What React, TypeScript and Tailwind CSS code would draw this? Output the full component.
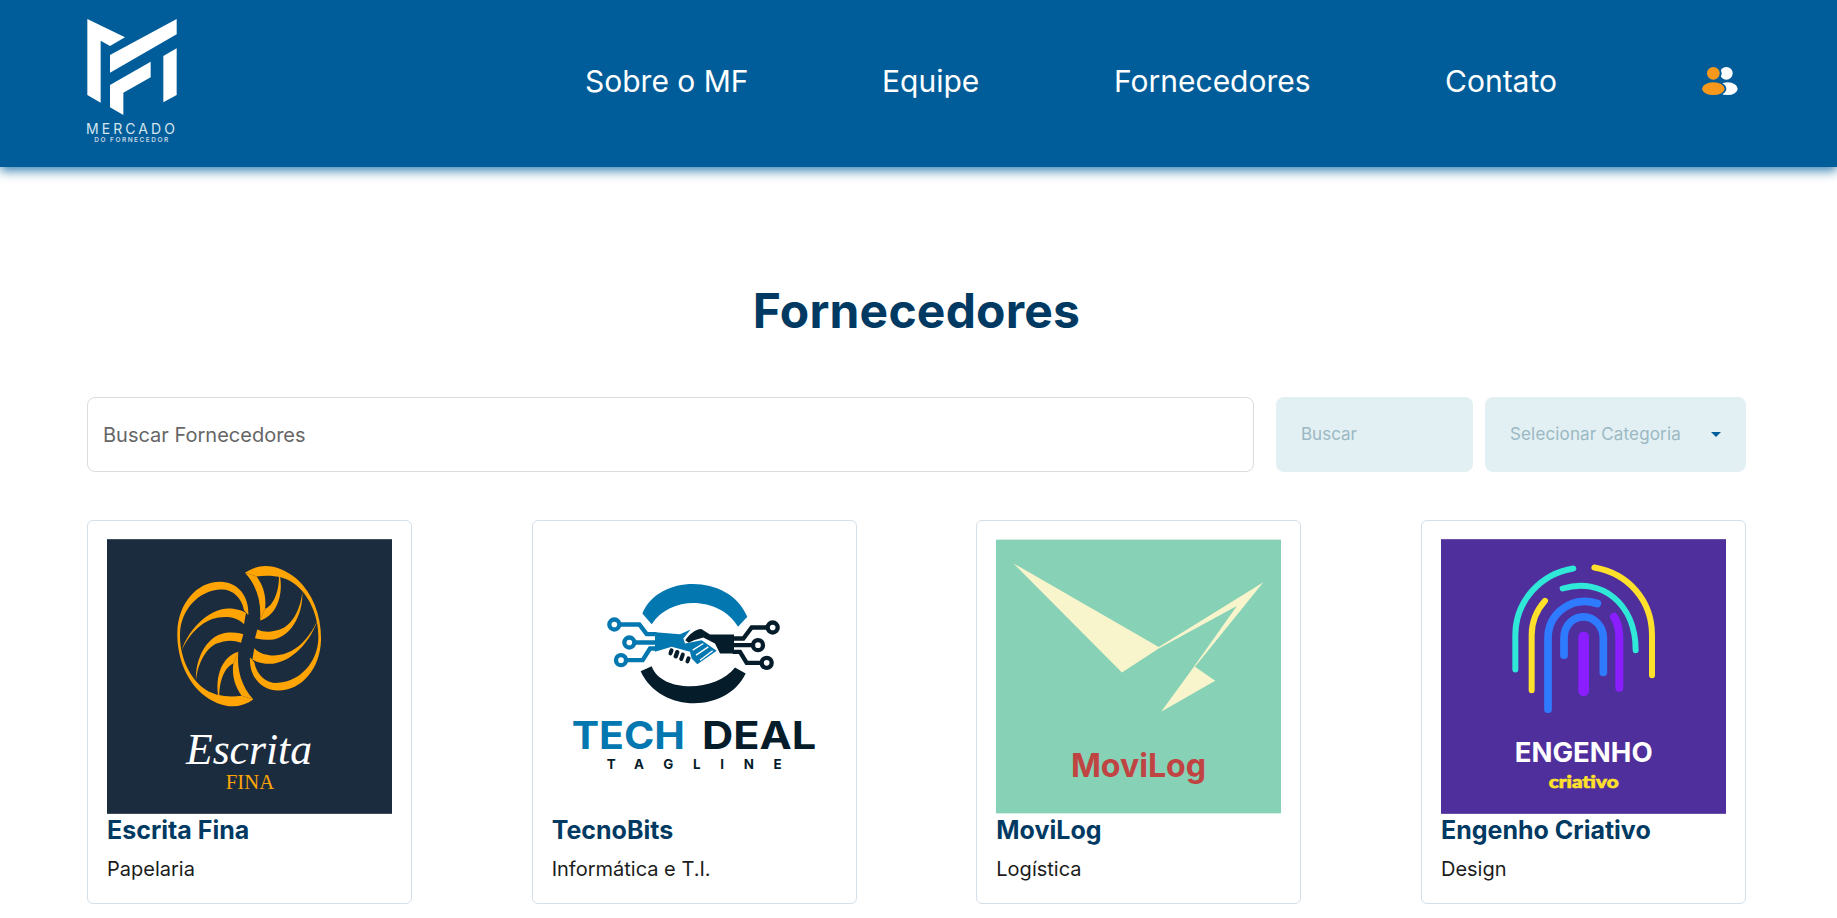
import { ReactNode } from 'react';

const navItems = [
  { label: 'Sobre o MF', width: 'w-[161px]' },
  { label: 'Equipe', width: 'w-[96px]' },
  { label: 'Fornecedores', width: 'w-[195px]' },
  { label: 'Contato', width: 'w-[114px]' },
];

function MfLogo() {
  return (
    <div className="flex w-[92px] flex-col items-center">
      <svg width="90" height="96" viewBox="82 57 268 288" fill="#ffffff">
        <polygon points="82,57 195,112 150,138 122,122 122,308 82,285" />
        <polygon points="350,57 350,103 150,218 150,165" />
        <polygon points="272,185 272,232 190,278 190,345 150,322 150,255" />
        <polygon points="350,145 350,285 310,307 310,168" />
      </svg>
      <span className="mt-[7px] text-[14px] leading-[13px] tracking-[3.1px] whitespace-nowrap text-[#d5e5ef]">MERCADO</span>
      <span className="mt-[2px] text-[6.5px] leading-[7px] font-semibold tracking-[1.5px] whitespace-nowrap text-[#c3d8e6]">DO FORNECEDOR</span>
    </div>
  );
}

function UserIcon() {
  return (
    <svg width="36" height="30" viewBox="0 0 108 90">
      <circle cx="73" cy="22" r="19" fill="#ffffff" />
      <ellipse cx="77" cy="68" rx="30" ry="19" fill="#ffffff" />
      <circle cx="34" cy="22" r="25" fill="#015d99" />
      <ellipse cx="34" cy="68" rx="39" ry="23" fill="#015d99" />
      <circle cx="34" cy="22" r="19" fill="#f7981d" />
      <ellipse cx="34" cy="68" rx="34" ry="19" fill="#f7981d" />
    </svg>
  );
}

function EscritaLogo() {
  const lobe = (
    <>
      <path d="M250 418 C205 450 150 445 95 400 C45 355 20 285 22 215 C25 130 80 65 150 65 C205 65 238 110 235 165 L222 150 C215 110 185 85 150 88 C85 92 32 150 30 220 C28 285 55 345 95 380 C130 410 180 412 215 407Z" />
      <path d="M33 275 C60 195 125 145 175 145 C195 145 215 150 228 158 L222 192 C200 170 170 168 145 172 C95 180 55 225 33 275Z" />
      <path d="M78 362 C75 290 115 220 175 217 C190 217 205 218 220 222 L213 248 C190 238 165 240 140 250 C105 265 82 315 78 362Z" />
      <path d="M145 408 C135 350 155 290 205 275 L190 310 C165 320 148 360 148 408Z" />
      <path d="M205 275 C200 330 215 380 250 418 L215 407 C195 380 185 345 190 310Z" />
    </>
  );
  return (
    <svg className="block h-full w-full" viewBox="81 87 855 824">
      <rect x="81" y="87" width="855" height="824" fill="#1c2c3f" />
      <g fill="#fea405" transform="translate(270 150)">
        {lobe}
        <g transform="rotate(180 237.5 228)">{lobe}</g>
      </g>
      <text x="507" y="762" textAnchor="middle" fontFamily="'Liberation Serif', serif" fontStyle="italic" fontSize="130" fill="#ffffff" textLength="378" lengthAdjust="spacingAndGlyphs">Escrita</text>
      <text x="510" y="836" textAnchor="middle" fontFamily="'Liberation Serif', serif" fontSize="60" fill="#fea405" textLength="145" lengthAdjust="spacingAndGlyphs">FINA</text>
    </svg>
  );
}

function TechDealLogo() {
  const blue = '#0277b0';
  const dark = '#051c2a';
  return (
    <svg className="block h-full w-full" viewBox="66 87 855 824">
      <rect x="66" y="87" width="855" height="824" fill="#ffffff" />
      <path d="M337 310 C385 190 600 190 652 320 L624 350 C575 262 425 250 365 342Z" fill={blue} />
      <g transform="translate(210 300)">
        <path d="M122 183 L155 168 C185 250 350 245 405 172 L437 190 C380 310 180 310 122 183Z" fill={dark} />
        <g fill="none" stroke={blue} strokeWidth="13">
          <circle cx="43" cy="43" r="15" />
          <circle cx="88" cy="97" r="15" />
          <circle cx="63" cy="150" r="15" />
          <path d="M58 43 H118 L140 72 H170 M103 97 H170 M78 150 H128 L150 115 H170" />
        </g>
        <path d="M165 66 L240 72 L272 58 L250 85 L255 100 L305 90 L350 122 L292 162 L275 145 L270 125 L215 110 L165 125Z" fill={blue} />
        <g stroke="#ffffff" strokeWidth="4">
          <path d="M300 150 L338 122 M288 135 L325 110 M278 120 L310 100" />
        </g>
        <g fill={dark}>
          <rect x="207" y="114" width="12" height="22" rx="6" transform="rotate(20 213 125)" />
          <rect x="223" y="119" width="13" height="26" rx="6" transform="rotate(20 229 132)" />
          <rect x="240" y="127" width="12" height="26" rx="6" transform="rotate(20 246 140)" />
          <rect x="258" y="138" width="12" height="22" rx="6" transform="rotate(20 264 149)" />
        </g>
        <path d="M256 90 C268 72 290 55 305 57 L330 73 H402 V130 L360 130 L345 100 L310 82 L282 90 L266 98Z" fill={dark} />
        <g fill="none" stroke={dark} strokeWidth="13">
          <circle cx="518" cy="52" r="15" />
          <circle cx="474" cy="105" r="15" />
          <circle cx="500" cy="158" r="15" />
          <path d="M503 52 H455 L430 85 H398 M459 105 H398 M485 158 H440 L420 125 H398" />
        </g>
      </g>
      <text x="125" y="716" fontFamily="Inter, sans-serif" fontWeight="700" fontSize="116" fill={blue} textLength="340" lengthAdjust="spacingAndGlyphs">TECH</text>
      <text x="516" y="716" fontFamily="Inter, sans-serif" fontWeight="700" fontSize="116" fill={dark} textLength="343" lengthAdjust="spacingAndGlyphs">DEAL</text>
      <text x="230" y="777" fontFamily="Inter, sans-serif" fontWeight="700" fontSize="40" fill={dark} textLength="525">TAGLINE</text>
    </svg>
  );
}

function MoviLogLogo() {
  return (
    <svg className="block h-full w-full" viewBox="63 87 858 824">
      <rect x="63" y="87" width="858" height="824" fill="#87d1b7" />
      <polygon points="115,158 553,410 868,215 662,470 723,512 560,605 655,475 788,287 553,415 442,487" fill="#f8f4cb" />
      <text x="492" y="803" textAnchor="middle" fontFamily="Inter, sans-serif" fontWeight="700" fontSize="100" fill="#c04442" textLength="407" lengthAdjust="spacingAndGlyphs">MoviLog</text>
    </svg>
  );
}

function EngenhoLogo() {
  return (
    <svg className="block h-full w-full" viewBox="78 87 855 824">
      <rect x="78" y="87" width="855" height="824" fill="#4f2f9c" />
      <g fill="none" strokeLinecap="round" strokeWidth="18">
        <path d="M301 478 V375 C301 270 380 190 475 175" stroke="#2fe8d8" />
        <path d="M538 172 C640 190 711 270 711 375 V495" stroke="#ffe02a" />
        <path d="M443 235 C560 200 662 280 662 420" stroke="#2fe8d8" />
        <path d="M350 540 V375 C350 330 365 300 390 272" stroke="#ffe02a" />
        <path d="M399 597 V385 C399 310 470 255 547 280" stroke="#2f7bff" strokeWidth="23" />
        <path d="M447 435 V385 C447 340 480 320 505 320 C540 320 565 350 565 385 V487" stroke="#2f7bff" strokeWidth="23" />
        <path d="M506 380 V542" stroke="#8a1eff" strokeWidth="32" />
        <path d="M597 320 C610 340 613 360 613 385 V533" stroke="#8a1eff" strokeWidth="24" />
      </g>
      <text x="506" y="755" textAnchor="middle" fontFamily="Inter, sans-serif" fontWeight="700" fontSize="80" fill="#ffffff" textLength="414" lengthAdjust="spacingAndGlyphs">ENGENHO</text>
      <text x="506" y="835" textAnchor="middle" fontFamily="Lato, sans-serif" fontWeight="900" fontSize="52" fill="#ffe02a" stroke="#ffe02a" strokeWidth="2" textLength="210" lengthAdjust="spacingAndGlyphs">criativo</text>
    </svg>
  );
}

function SupplierCard({ logo, name, category }: { logo: ReactNode; name: string; category: string }) {
  return (
    <div className="h-[384px] w-[325px] rounded-[6px] border border-[#d3e0ea] px-[19px] pt-[18px]">
      <div className="h-[275px] w-[285px]">{logo}</div>
      <h3 className="mt-[1px] text-[25px] leading-[30px] font-bold text-[#003a63]">{name}</h3>
      <p className="mt-[10px] text-[20px] leading-[28px] text-[#1c1c1c]">{category}</p>
    </div>
  );
}

export default function App() {
  return (
    <div className="min-h-[918px] bg-white font-['Inter',sans-serif]">
      <header className="flex h-[167px] items-center justify-between bg-[#015d99] pr-[99px] pb-[4px] pl-[86px] shadow-[0_4px_10px_rgba(1,93,153,0.75)]">
        <MfLogo />
        <nav className="mb-[2px] flex items-center">
          {navItems.map((item, i) => (
            <a key={item.label} className={`${item.width} ${i < 3 ? 'mr-[136px]' : 'mr-[143px]'} text-[30px] leading-[36px] whitespace-nowrap text-white`}>
              {item.label}
            </a>
          ))}
          <UserIcon />
        </nav>
      </header>

      <main className="pr-[91px] pb-[14px] pl-[87px]">
        <h1 className="pt-[115px] text-center text-[48px] leading-[58px] font-bold tracking-[0.2px] text-[#003a63]">Fornecedores</h1>

        <div className="mt-[57px] flex h-[75px] gap-[12px]">
          <input
            placeholder="Buscar Fornecedores"
            className="mr-[10px] h-full w-[1167px] rounded-[8px] border border-[#dcdcdc] px-[15px] text-[20px] text-[#666] outline-none placeholder:text-[#666]"
          />
          <button className="h-full w-[197px] rounded-[8px] bg-[#e2f0f4] px-[25px] text-left text-[17px] text-[#9bb8c2]">Buscar</button>
          <div className="flex h-full w-[261px] items-center justify-between rounded-[8px] bg-[#e2f0f4] pr-[25px] pl-[25px] text-[17px] tracking-[0.15px] text-[#9bb8c2]">
            <span>Selecionar Categoria</span>
            <span className="h-0 w-0 border-x-[5px] border-t-[5px] border-x-transparent border-t-[#015d99]" />
          </div>
        </div>

        <div className="mt-[48px] flex justify-between">
          <SupplierCard logo={<EscritaLogo />} name="Escrita Fina" category="Papelaria" />
          <SupplierCard logo={<TechDealLogo />} name="TecnoBits" category="Informática e T.I." />
          <SupplierCard logo={<MoviLogLogo />} name="MoviLog" category="Logística" />
          <SupplierCard logo={<EngenhoLogo />} name="Engenho Criativo" category="Design" />
        </div>
      </main>
    </div>
  );
}
